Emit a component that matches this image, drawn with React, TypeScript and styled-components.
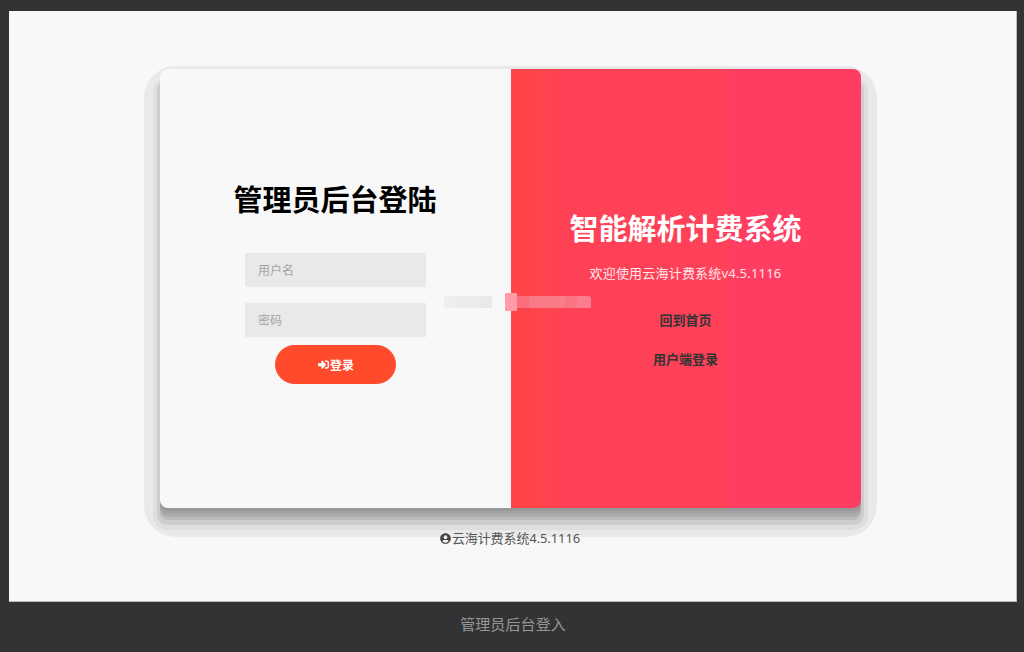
import React from 'react';
import styled, { createGlobalStyle } from 'styled-components';
import { FaSignInAlt, FaUserCircle } from 'react-icons/fa';

const FONT = `"Noto Sans", "Noto Sans CJK SC", sans-serif`;

const GlobalStyle = createGlobalStyle`
  html, body {
    margin: 0;
    padding: 0;
    background: #333335;
    font-family: ${FONT};
  }
  * {
    box-sizing: border-box;
  }
`;

const Page = styled.div`
  width: 1024px;
  height: 652px;
  display: flex;
  flex-direction: column;
  overflow: hidden;
  background: #333335;
`;

const Viewport = styled.main`
  flex: 0 0 591px;
  margin: 11px 7px 0 9px;
  padding: 58px 5px 0 0;
  display: flex;
  flex-direction: column;
  align-items: center;
  background: #f8f8f8;
  border-right: 1px solid #bcbcbc;
  border-bottom: 1px solid #bcbcbc;
`;

// the shadow is banded in the reference, so it is stacked from hard layers
const Card = styled.section`
  position: relative;
  z-index: 0;
  flex: none;
  width: 701px;
  height: 439px;
  display: flex;

  &::before {
    content: '';
    position: absolute;
    inset: -3px -16px -29px -16px;
    z-index: -2;
    border-radius: 32px;
    background: #e9e9e9;
  }

  &::after {
    content: '';
    position: absolute;
    inset: 0;
    z-index: -1;
    border-radius: 8px;
    box-shadow:
      0 3px 0 0 #999999,
      0 6px 0 0 #a3a3a3,
      0 9px 0 0 #aeaeae,
      0 12px 0 0 #bcbcbc,
      0 14px 0 3px #cdcdcd,
      0 15px 0 7px #dedede;
  }
`;

const LoginForm = styled.form`
  flex: 0 0 351px;
  padding-top: 113px;
  display: flex;
  flex-direction: column;
  align-items: center;
  border-radius: 8px 0 0 8px;
  background: #f8f8f8;
`;

const FormTitle = styled.h1`
  margin: 0 0 35px;
  font-size: 29px;
  line-height: 36px;
  font-weight: 700;
  color: #000;
`;

const Field = styled.input<{ $gap: number }>`
  width: 181px;
  height: 34px;
  margin-bottom: ${p => p.$gap}px;
  padding: 0 13.5px;
  border: 0;
  outline: 0;
  background: #e9e9e9;
  font-family: ${FONT};
  font-size: 12px;
  color: #333;

  &::placeholder {
    color: #a3a3a3;
    opacity: 1;
  }
`;

const SubmitButton = styled.button.attrs({ type: 'button' })`
  width: 121px;
  height: 39px;
  display: flex;
  align-items: center;
  justify-content: center;
  gap: 1px;
  padding: 0 0 0 2px;
  border: 1px solid #ff4b2b;
  border-radius: 20px;
  background: #ff4b2b;
  color: #fff;
  font-family: ${FONT};
  font-size: 12px;
  font-weight: 700;

  svg {
    width: 11px;
    height: 11px;
  }
`;

const Overlay = styled.aside`
  flex: 1;
  padding-top: 142px;
  display: flex;
  flex-direction: column;
  align-items: center;
  border-radius: 0 8px 8px 0;
  background: linear-gradient(
    to right,
    #ff4548 0,
    #ff444e 47px,
    #ff4156 47px,
    #ff4159 218px,
    #ff3d62 218px,
    #ff3d63 100%
  );
`;

const OverlayTitle = styled.h2`
  margin: 0 0 16px;
  font-size: 29px;
  line-height: 36px;
  font-weight: 700;
  color: #fff;
`;

const Welcome = styled.p`
  margin: 0 0 27px;
  font-size: 13px;
  line-height: 20px;
  letter-spacing: 0.2px;
  color: #ffe6ea;
`;

const OverlayLink = styled.a`
  margin-bottom: 19px;
  font-size: 13px;
  line-height: 20px;
  font-weight: 700;
  color: #333;
  text-decoration: none;
`;

const Mosaic = styled.div`
  position: absolute;
  left: 284px;
  top: 224px;
  height: 18px;
  display: flex;
  align-items: center;
`;

const MosaicCell = styled.span<{ $color: string; $tall?: boolean }>`
  width: 12px;
  height: ${p => (p.$tall ? 18 : 12)}px;
  background: ${p => p.$color};

  &:last-child {
    width: 14px;
    border-top-right-radius: 3px;
  }
`;

const MosaicGap = styled.span`
  width: 13px;
`;

const Copyright = styled.p`
  position: relative;
  z-index: 1;
  margin: 20px 0 0;
  display: flex;
  align-items: center;
  gap: 1px;
  font-size: 13px;
  line-height: 20px;
  letter-spacing: -0.1px;
  color: #555;

  svg {
    width: 11px;
    height: 11px;
    color: #444;
  }
`;

const BottomBar = styled.footer`
  flex: 1;
  display: flex;
  align-items: center;
  justify-content: center;
  padding: 0 0 8px 2px;
  font-size: 15px;
  letter-spacing: 0.1px;
  color: #969696;
`;

const LEFT_CELLS = ['#eeeef0', '#ececee', '#ececee', '#e9e9eb'];
const RIGHT_CELLS = ['#fb6c7c', '#f87a88', '#f87a88', '#f97c88', '#fa7484', '#fb7c8c'];

export default function App() {
  return (
    <Page>
      <GlobalStyle />
      <Viewport>
        <Card>
          <LoginForm>
            <FormTitle>管理员后台登陆</FormTitle>
            <Field $gap={16} placeholder="用户名" />
            <Field $gap={8} type="password" placeholder="密码" />
            <SubmitButton>
              <FaSignInAlt />
              登录
            </SubmitButton>
          </LoginForm>
          <Overlay>
            <OverlayTitle>智能解析计费系统</OverlayTitle>
            <Welcome>欢迎使用云海计费系统v4.5.1116</Welcome>
            <OverlayLink href="#">回到首页</OverlayLink>
            <OverlayLink href="#">用户端登录</OverlayLink>
          </Overlay>
          <Mosaic>
            {LEFT_CELLS.map((c, i) => (
              <MosaicCell key={i} $color={c} />
            ))}
            <MosaicGap />
            <MosaicCell $color="#ff9ca6" $tall />
            {RIGHT_CELLS.map((c, i) => (
              <MosaicCell key={i} $color={c} />
            ))}
          </Mosaic>
        </Card>
        <Copyright>
          <FaUserCircle />
          云海计费系统4.5.1116
        </Copyright>
      </Viewport>
      <BottomBar>管理员后台登入</BottomBar>
    </Page>
  );
}
